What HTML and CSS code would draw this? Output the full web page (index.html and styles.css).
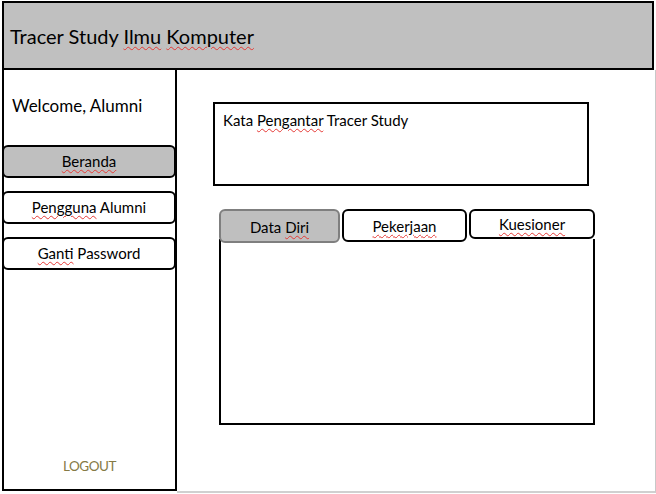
FILE: index.html
```html
<!DOCTYPE html>
<html lang="id">
<head>
<meta charset="utf-8">
<title>Tracer Study Ilmu Komputer</title>
<link rel="stylesheet" href="styles.css">
</head>
<body>
<div class="page">
  <header class="header">
    <h1 class="title">Tracer Study <span class="sq">Ilmu</span> <span class="sq">Komputer</span></h1>
  </header>
  <div class="layout">
    <aside class="sidebar">
      <div class="welcome">Welcome, Alumni</div>
      <nav class="menu">
        <div class="btn btn-active"><span class="label"><span class="sq">Beranda</span></span></div>
        <div class="btn"><span class="label"><span class="sq">Pengguna</span> Alumni</span></div>
        <div class="btn"><span class="label"><span class="sq">Ganti</span> Password</span></div>
      </nav>
      <div class="logout">LOGOUT</div>
    </aside>
    <main class="main">
      <section class="intro">Kata <span class="sq">Pengantar</span> Tracer Study</section>
      <section class="tabbox">
        <div class="tabrow">
          <div class="tab tab-1 tab-active"><span class="label">Data <span class="sq">Diri</span></span></div>
          <div class="tab tab-2"><span class="label"><span class="sq">Pekerjaan</span></span></div>
          <div class="tab tab-3"><span class="label"><span class="sq">Kuesioner</span></span></div>
        </div>
        <div class="panel"></div>
      </section>
    </main>
  </div>
</div>
</body>
</html>
```
FILE: styles.css
```css
html, body {
  margin: 0;
  padding: 0;
  background: #ffffff;
}
body {
  font-family: Lato, "Open Sans", sans-serif;
  color: #000;
}
.page {
  width: 656px;
  height: 494px;
  box-sizing: border-box;
  padding: 1px 0 0 2px;
  display: flex;
  flex-direction: column;
}
.header {
  width: 652px;
  height: 69px;
  box-sizing: border-box;
  border: 2px solid #000;
  background: #c0c0c0;
  display: flex;
  align-items: center;
  padding: 0 0 0 6px;
  flex: none;
}
.title {
  margin: 0;
  font-weight: normal;
  font-size: 20px;
  line-height: 24px;
}
.sq {
  text-decoration: underline wavy #e53935;
  text-decoration-thickness: 1px;
  text-underline-offset: 2px;
}
.label {
  white-space: nowrap;
}
.layout {
  display: flex;
  align-items: flex-start;
  height: 423px;
  flex: none;
}
.sidebar {
  width: 175px;
  height: 421px;
  box-sizing: border-box;
  border: 2px solid #000;
  border-top: none;
  display: flex;
  flex-direction: column;
  flex: none;
}
.welcome {
  font-size: 17px;
  line-height: 20px;
  padding-left: 8px;
  margin-top: 26px;
  margin-bottom: 29px;
}
.menu {
  display: flex;
  flex-direction: column;
  gap: 13px;
  margin-left: -2px;
}
.btn {
  width: 174px;
  height: 33px;
  box-sizing: border-box;
  border: 2px solid #000;
  border-radius: 6px;
  background: #fff;
  display: flex;
  align-items: center;
  justify-content: center;
  font-size: 15px;
  line-height: 18px;
  padding-bottom: 1px;
}
.btn-active {
  background: #bfbfbf;
}
.logout {
  margin-top: auto;
  padding-bottom: 15px;
  text-align: center;
  font-size: 13.5px;
  line-height: 16px;
  letter-spacing: -0.5px;
  color: #857a45;
}
.main {
  flex: 1;
  height: 423px;
  box-sizing: border-box;
  border-right: 1px solid #c8c8c8;
  border-bottom: 2px solid #d0d0d0;
  padding: 32px 0 0 36px;
}
.intro {
  width: 376px;
  height: 84px;
  box-sizing: border-box;
  border: 2px solid #000;
  padding: 7px 0 0 8px;
  font-size: 15px;
  line-height: 18px;
  margin-bottom: 23px;
}
.tabbox {
  width: 376px;
  margin-left: 6px;
}
.tabrow {
  display: flex;
  align-items: flex-start;
  gap: 2px;
  height: 30px;
}
.tab {
  box-sizing: border-box;
  border: 2px solid #000;
  border-radius: 6px;
  background: #fff;
  display: flex;
  align-items: center;
  justify-content: center;
  font-size: 15px;
  line-height: 18px;
  flex: none;
}
.tab-1 {
  width: 121px;
  height: 34px;
  padding-top: 2px;
}
.tab-2 {
  width: 125px;
  height: 33px;
}
.tab-3 {
  width: 126px;
  height: 30px;
}
.tab-active {
  background: #bfbfbf;
  border-color: #7f7f7f;
}
.panel {
  height: 186px;
  box-sizing: border-box;
  border: 2px solid #000;
  border-top: none;
}
```
